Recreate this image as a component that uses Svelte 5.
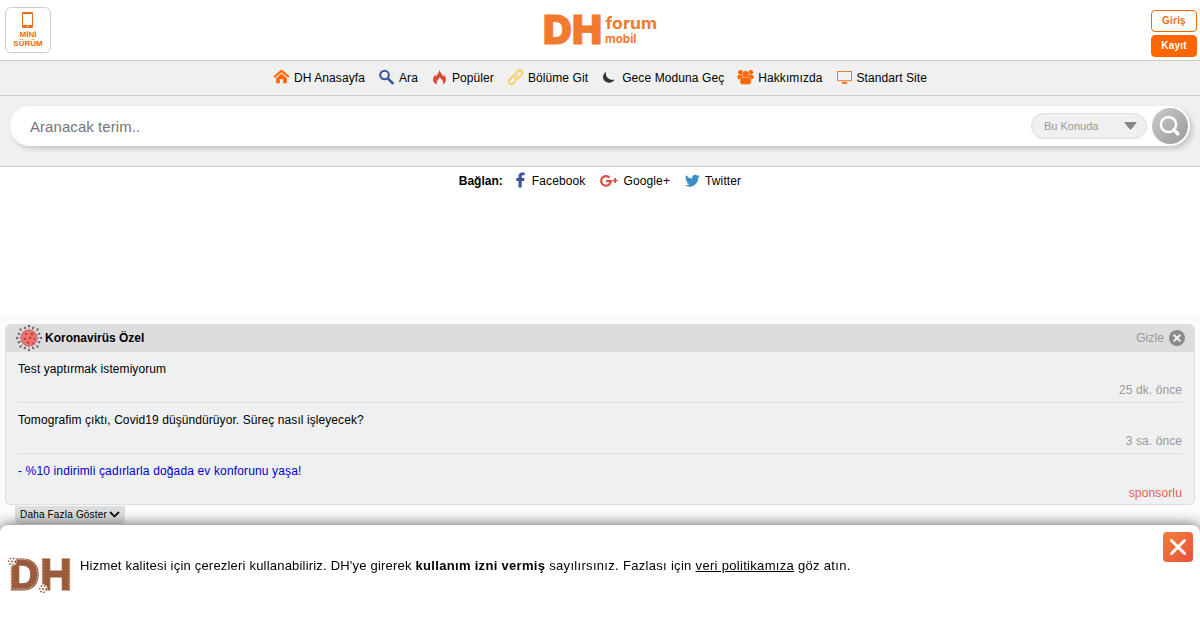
<script>
  const menu = [
    { label: 'DH Anasayfa', icon: 'home' },
    { label: 'Ara', icon: 'search' },
    { label: 'Popüler', icon: 'fire' },
    { label: 'Bölüme Git', icon: 'link' },
    { label: 'Gece Moduna Geç', icon: 'moon' },
    { label: 'Hakkımızda', icon: 'users' },
    { label: 'Standart Site', icon: 'desktop' }
  ];

  const topics = [
    { title: 'Test yaptırmak istemiyorum', info: '25 dk. önce' },
    { title: 'Tomografim çıktı, Covid19 düşündürüyor. Süreç nasıl işleyecek?', info: '3 sa. önce' },
    { title: '- %10 indirimli çadırlarla doğada ev konforunu yaşa!', info: 'sponsorlu', sponsored: true }
  ];

  // spikes around the virus icon, in degrees
  const spikes = Array.from({ length: 16 }, (_, i) => i * 22.5);

  let term = $state('');
</script>

{#snippet menuIcon(name)}
  <svg class="menu-icon" viewBox="0 0 15 16">
    {#if name === 'home'}
      <path d="M.8 7.500 7.500 1.900 14.200 7.500" fill="none" stroke="#f60" stroke-width="2.200" stroke-linecap="round" stroke-linejoin="round" />
      <path d="M2.200 9.100 7.500 4.700l5.300 4.400v5.100H9.200v-4H5.800v4H2.200z" fill="#f60" />
    {:else if name === 'search'}
      <circle cx="5.500" cy="6" r="4.300" fill="none" stroke="#3f569f" stroke-width="2.100" />
      <path d="m8.800 9.400 4.900 4.800" stroke="#3f569f" stroke-width="2.600" stroke-linecap="round" />
    {:else if name === 'fire'}
      <path d="M7.200.8c.5 2.600 3.600 4.400 4 7 .6-.5.8-1.300.8-2 1.200 1.500 2.200 3.300 2 5.200-.2 2.100-1.500 3.700-3.300 4.400.8-1.600.4-3.200-.5-4.500L7.800 8.300 5.400 11.500c-.8 1.300-.8 2.700-.2 3.900C2.600 14.800.9 12.900 1 10.700c.1-2 1.200-3.400 2-4.900.3.900.5 1.400 1 1.800C5.100 5.400 7.300 3.600 7.200.8z" fill="#dc4a38" />
    {:else if name === 'link'}
      <g fill="none" stroke="#f3ce55" stroke-width="1.700" stroke-linecap="round">
        <path d="m7.300 4.700 2.400-2.500a2.650 2.650 0 0 1 3.800 3.800L10.300 9.200a2.650 2.650 0 0 1-3.800 0" />
        <path d="m7.700 12-2.200 2.200a2.650 2.650 0 0 1-3.800-3.800l3.200-3.200a2.650 2.650 0 0 1 3.800 0" />
      </g>
    {:else if name === 'moon'}
      <path d="M4 3C.5 5 .2 9.500 2.800 12c2.900 2.700 7.600 2.200 9.700-1.300C7 11.700 3 8 4 3z" fill="#333" />
    {:else if name === 'users'}
      <g fill="#f60">
        <circle cx="2.400" cy="3.200" r="2.300" />
        <circle cx="12.800" cy="3.200" r="2.300" />
        <rect x="-.5" y="5.700" width="16.200" height="4.500" rx="2" />
        <rect x="2" y="8.200" width="11.200" height="7.400" rx="2.800" stroke="#f0f0f0" stroke-width=".4" />
        <circle cx="7.600" cy="5.200" r="3.400" stroke="#f0f0f0" stroke-width=".4" />
      </g>
    {:else if name === 'desktop'}
      <rect x=".5" y="2.500" width="14" height="9.200" fill="none" stroke="#f47a28" />
      <path d="M5.500 12.800h4l1 2h-6z" fill="#f60" />
    {/if}
  </svg>
{/snippet}

<header class="top">
  <a class="mini" href="#mini">
    <svg width="11" height="16" viewBox="0 0 11 16">
      <rect width="11" height="16" rx="1.200" fill="#e96d1b" />
      <path d="M1 2h9v11H1z" fill="#fff" />
      <circle cx="5.500" cy="14.500" r=".8" fill="#fff" />
    </svg>
    <span>MİNİ<br />SÜRÜM</span>
  </a>
  <svg class="logo" width="116" height="34" viewBox="0 0 116 34">
    <text class="logo-dh" x="0" y="32" font-size="40" textLength="59" lengthAdjust="spacingAndGlyphs">DH</text>
    <text x="62.500" y="17" font-size="16.500" textLength="51.500" lengthAdjust="spacingAndGlyphs">forum</text>
    <text x="62" y="31" font-size="12" textLength="31.500" lengthAdjust="spacingAndGlyphs">mobil</text>
  </svg>
  <div class="account">
    <a class="login" href="#giris">Giriş</a>
    <a class="register" href="#kayit">Kayıt</a>
  </div>
</header>

<nav class="menu">
  {#each menu as item (item.icon)}
    <a href="#{item.icon}">{@render menuIcon(item.icon)}{item.label}</a>
  {/each}
</nav>

<section class="search">
  <div class="search-box">
    <input type="text" placeholder="Aranacak terim.." bind:value={term} />
    <div class="scope">
      <span>Bu Konuda</span>
      <svg width="13" height="8" viewBox="0 0 13 8"><path d="M.8.5h11.400L7.300 6.700q-.8.800-1.600 0z" fill="#888" stroke="#888" /></svg>
    </div>
    <button class="search-btn" aria-label="Ara">
      <svg width="22" height="22" viewBox="0 0 22 22" fill="none" stroke="#fff" stroke-linecap="round">
        <circle cx="9.500" cy="9.500" r="7.600" stroke-width="2.500" />
        <path d="m14.500 14.500 1.500 1.500" stroke-width="2.500" />
        <path d="m16.800 16.800 2 2" stroke-width="3.600" />
      </svg>
    </button>
  </div>
</section>

<section class="connect">
  <b>Bağlan:</b>
  <a class="facebook" href="#facebook">
    <svg width="9" height="16" viewBox="0 0 9 16"><path d="M2.500 15.500V9H.3V6h2.200V4.200C2.500 1.700 4 .5 6.200.5h2.400v2.800H7c-1 0-1.300.5-1.300 1.300V6h2.800L8.100 9H5.700v6.500z" fill="#3f549c" /></svg>
    Facebook
  </a>
  <a class="google" href="#google">
    <svg width="18" height="14" viewBox="0 0 18 14" fill="none" stroke="#dc4e41">
      <path d="M9.500 3.600A4.800 4.800 0 1 0 10.800 7.200H6" stroke-width="2.200" />
      <path d="M12.500 6.500h5.200M15.100 3.900v5.200" stroke-width="1.700" />
    </svg>
    Google+
  </a>
  <a class="twitter" href="#twitter">
    <svg width="15" height="15" viewBox="0 0 24 24"><path d="M23.600 4.900a9 9 0 0 1-2.700.8 4.900 4.900 0 0 0 2-2.700 9.500 9.500 0 0 1-3 1.200A4.900 4.900 0 0 0 11.600 8.600 13.700 13.700 0 0 1 1.600 3.400a4.900 4.900 0 0 0 1.500 6.500 4.600 4.600 0 0 1-2.200-.6c0 2.300 1.600 4.400 3.900 4.900-.7.200-1.400.2-2.200.1a4.900 4.900 0 0 0 4.600 3.400A9.700 9.700 0 0 1 0 19.700 13.800 13.800 0 0 0 21.100 7.500a9.400 9.400 0 0 0 2.500-2.600z" fill="#3b8bc5" /></svg>
    Twitter
  </a>
</section>

<main>
  <section class="panel">
    <header class="panel-head">
      <svg width="28" height="28" viewBox="-14 -14 28 28">
        {#each spikes as angle, i (angle)}
          <g transform="rotate({angle})">
            <path d="M0-8v-3" stroke="#b77b7a" stroke-width=".8" />
            <circle cy={i % 2 ? -11 : -12.1} r="1.200" fill="#77686e" />
          </g>
        {/each}
        <circle r="8" fill="#ef736f" stroke="#b96567" />
        <g fill="#bd4144">
          <circle cx="-3" cy="-4" r="1.200" /><circle cx="3" cy="-4" r="1.500" />
          <circle cx="-4" cy="1" r="1.300" /><circle cx="1" cy="0" r="1.400" />
          <circle cx="5" cy="1" r="1.100" /><circle cx="-1" cy="4.500" r="1.300" /><circle cx="4" cy="5" r=".9" />
        </g>
      </svg>
      <b>Koronavirüs Özel</b>
      <span class="hide">Gizle</span>
      <svg class="hide-icon" width="16" height="16" viewBox="0 0 16 16">
        <circle cx="8" cy="8" r="8" fill="#8b8b8b" />
        <path d="m5.200 5.200 5.600 5.600m0-5.600-5.600 5.600" stroke="#eee" stroke-width="2" stroke-linecap="round" />
      </svg>
    </header>
    <ul>
      {#each topics as topic (topic.title)}
        <li class:sponsored={topic.sponsored}>
          <a href="#konu">{topic.title}</a>
          <span>{topic.info}</span>
        </li>
      {/each}
    </ul>
  </section>
  <button class="more">
    Daha Fazla Göster
    <svg width="11" height="7" viewBox="0 0 11 7"><path d="m1 1 4.500 4.500L10 1" fill="none" stroke="#111" stroke-width="1.800" /></svg>
  </button>
</main>

<div class="cookie">
  <svg width="64" height="38" viewBox="0 0 64 38">
    <text class="cookie-logo" x="2" y="32.500" font-size="42" textLength="63" lengthAdjust="spacingAndGlyphs">DH</text>
    <!-- stitching along the outer edges of the letters -->
    <g class="stitch">
      <path d="M4.700 2.600H17C35 2.600 35 31.900 17 31.900H4.700z" />
      <path d="M35.800 2.600v29.300M62.300 2.600v29.300" />
    </g>
    {#each [[5, 4.5], [36, 32]] as [x, y]}
      <g transform="translate({x} {y})">
        <circle r="4.500" fill="#fff" />
        <circle r="3.300" fill="none" stroke="#9a5b3d" stroke-width="1.500" stroke-dasharray="1.600 1.600" />
        <circle r="1" fill="#9a5b3d" />
      </g>
    {/each}
  </svg>
  <p>
    <span class="lead">Hizmet kalitesi için çerezleri kullanabiliriz. DH'ye girerek</span>
    <b>kullanım izni vermiş</b> sayılırsınız. Fazlası için <a href="#veri">veri politikamıza</a> göz atın.
  </p>
  <button aria-label="Kapat">
    <svg width="18" height="18" viewBox="0 0 18 18"><path d="m2.500 2.500 13 13m0-13-13 13" stroke="#fff" stroke-width="3" stroke-linecap="round" /></svg>
  </button>
</div>

<style>
  :global(body) {
    height: 630px;
    overflow: hidden;
    background: #fbfbfb;
    font-family: 'Liberation Sans', Arial, sans-serif;
    font-size: 12px;
    color: #000;
  }

  a {
    color: inherit;
    text-decoration: none;
  }

  svg {
    display: block;
    flex-shrink: 0;
  }

  button {
    border: 0;
    padding: 0;
    font-family: inherit;
  }

  .top {
    display: flex;
    justify-content: space-between;
    align-items: flex-start;
    height: 60px;
    box-sizing: border-box;
    padding: 7px 3px 0 5px;
    background: #fff;
  }

  .mini {
    display: flex;
    flex-direction: column;
    align-items: center;
    gap: 2px;
    box-sizing: border-box;
    width: 46px;
    height: 46px;
    padding-top: 4px;
    border: 1px solid #ccc;
    border-radius: 6px;
    color: #f0690f;
    font-size: 8px;
    font-weight: bold;
    line-height: 9px;
    text-align: center;
  }

  .mini svg {
    margin-right: 1px;
  }

  .logo {
    margin-top: 5px;
    overflow: visible;
    fill: #f27a2e;
    font-family: Inter, sans-serif;
    font-weight: 700;
  }

  .logo-dh {
    font-weight: 900;
    stroke: #f27a2e;
    stroke-width: 0.8;
  }

  .account {
    display: flex;
    flex-direction: column;
    gap: 3px;
    margin-top: 3px;
  }

  .account a {
    box-sizing: border-box;
    width: 46px;
    height: 22px;
    border: 1px solid #f60;
    border-radius: 4px;
    font-size: 10px;
    font-weight: bold;
    letter-spacing: 0.2px;
    line-height: 20px;
    text-align: center;
  }

  .login {
    color: #e96d1b;
  }

  .register {
    background: #f60;
    color: #fff;
  }

  .menu {
    display: flex;
    justify-content: center;
    gap: 14px;
    height: 34px;
    padding-left: 1px;
    border-top: 1px solid #ccc;
    border-bottom: 1px solid #ccc;
    background: #f0f0f0;
    letter-spacing: 0.09px;
  }

  .menu a {
    display: flex;
    align-items: center;
    gap: 5px;
  }

  .menu-icon {
    width: 15px;
    height: 16px;
    margin-top: -3px;
    overflow: visible;
  }

  .search {
    height: 60px;
    padding: 10px 10px 0;
    border-bottom: 1px solid #ccc;
    background: #f0f0f0;
  }

  .search-box {
    display: flex;
    align-items: center;
    height: 40px;
    border-radius: 20px;
    background: #fff;
    box-shadow: 3px 3px 5px rgba(0, 0, 0, 0.17);
  }

  .search-box input {
    flex: 1;
    border: 0;
    padding: 0 20px;
    outline: 0;
    background: none;
    font-family: inherit;
    font-size: 15px;
    letter-spacing: 0.06px;
  }

  .search-box input::placeholder {
    color: #757575;
  }

  .scope {
    display: flex;
    align-items: center;
    justify-content: space-between;
    box-sizing: border-box;
    width: 116px;
    height: 26px;
    margin-right: 5px;
    padding: 0 9px 0 12px;
    border: 1px solid #ddd;
    border-radius: 13px;
    background: #f0f0f0;
    color: #999;
    font-size: 11px;
  }

  .search-btn {
    display: flex;
    align-items: center;
    justify-content: center;
    width: 36px;
    height: 36px;
    margin-right: 2px;
    border-radius: 50%;
    background: linear-gradient(135deg, #ccc, #999);
  }

  .connect {
    display: flex;
    justify-content: center;
    height: 147px;
    background: #fff;
    line-height: 28px;
  }

  .connect a {
    display: flex;
    height: 28px;
    align-items: center;
    letter-spacing: 0.12px;
  }

  .connect svg {
    margin-top: -2px;
    margin-right: 5px;
  }

  .connect .facebook {
    margin: 0 15px 0 13px;
  }

  .connect .facebook svg {
    margin-right: 7px;
  }

  .connect .google {
    margin-right: 15px;
  }

  .connect .google svg {
    margin-top: 0;
  }

  main {
    padding: 10px 5px 0;
  }

  .panel {
    box-sizing: border-box;
    height: 181px;
    border: 1px solid #dcdddf;
    border-radius: 6px;
    background: #eff0f2;
    overflow: hidden;
  }

  .panel-head {
    display: flex;
    align-items: center;
    box-sizing: border-box;
    height: 27px;
    padding: 0 9px 2px;
    background: #dcdddf;
  }

  .panel-head b {
    margin-left: 2px;
  }

  .hide {
    margin-left: auto;
    color: #999;
    letter-spacing: 0.1px;
  }

  .hide-icon {
    margin-left: 5px;
  }

  ul {
    margin: 0;
    padding: 0 12px;
    list-style: none;
  }

  li {
    display: flex;
    flex-direction: column;
    box-sizing: border-box;
    height: 51px;
    padding-top: 7px;
    border-bottom: 1px solid #dcdddf;
    letter-spacing: 0.08px;
    line-height: 21px;
  }

  li:last-child {
    border-bottom: 0;
  }

  li span {
    align-self: flex-end;
    color: #999;
  }

  .sponsored {
    letter-spacing: 0.14px;
  }

  .sponsored a {
    color: #00c;
  }

  .sponsored span {
    margin-top: 1px;
    color: #e4604f;
  }

  .more {
    display: flex;
    align-items: center;
    gap: 2px;
    height: 18px;
    margin: 1px 0 0 10px;
    padding: 0 5px 1px;
    border-radius: 0 0 5px 5px;
    background: #dcdddf;
    color: #000;
    font-size: 10px;
    letter-spacing: 0.18px;
  }

  .cookie {
    position: fixed;
    right: 0;
    bottom: 0;
    left: 0;
    display: flex;
    align-items: flex-start;
    box-sizing: border-box;
    height: 105px;
    padding: 7px;
    border-radius: 8px 8px 0 0;
    background: #fff;
    box-shadow: 0 0 14px rgba(0, 0, 0, 0.65);
  }

  .cookie > svg {
    margin-top: 25px;
    overflow: visible;
  }

  .cookie-logo {
    fill: #9a5b3d;
    stroke: #9a5b3d;
    stroke-width: 1;
    font-family: Inter, sans-serif;
    font-weight: 800;
  }

  .stitch {
    fill: none;
    stroke: #e3c6b4;
    stroke-width: 0.8;
    stroke-dasharray: 2 1;
  }

  .cookie p {
    flex: 1;
    margin: 25px 0 0 9px;
    font-size: 13px;
    letter-spacing: 0.31px;
    line-height: 17px;
  }

  .lead {
    letter-spacing: 0.2px;
  }

  .cookie p a {
    text-decoration: underline;
  }

  .cookie button {
    display: flex;
    align-items: center;
    justify-content: center;
    width: 30px;
    height: 30px;
    border-radius: 4px;
    background: linear-gradient(135deg, #f0803c, #e8503c);
  }
</style>
